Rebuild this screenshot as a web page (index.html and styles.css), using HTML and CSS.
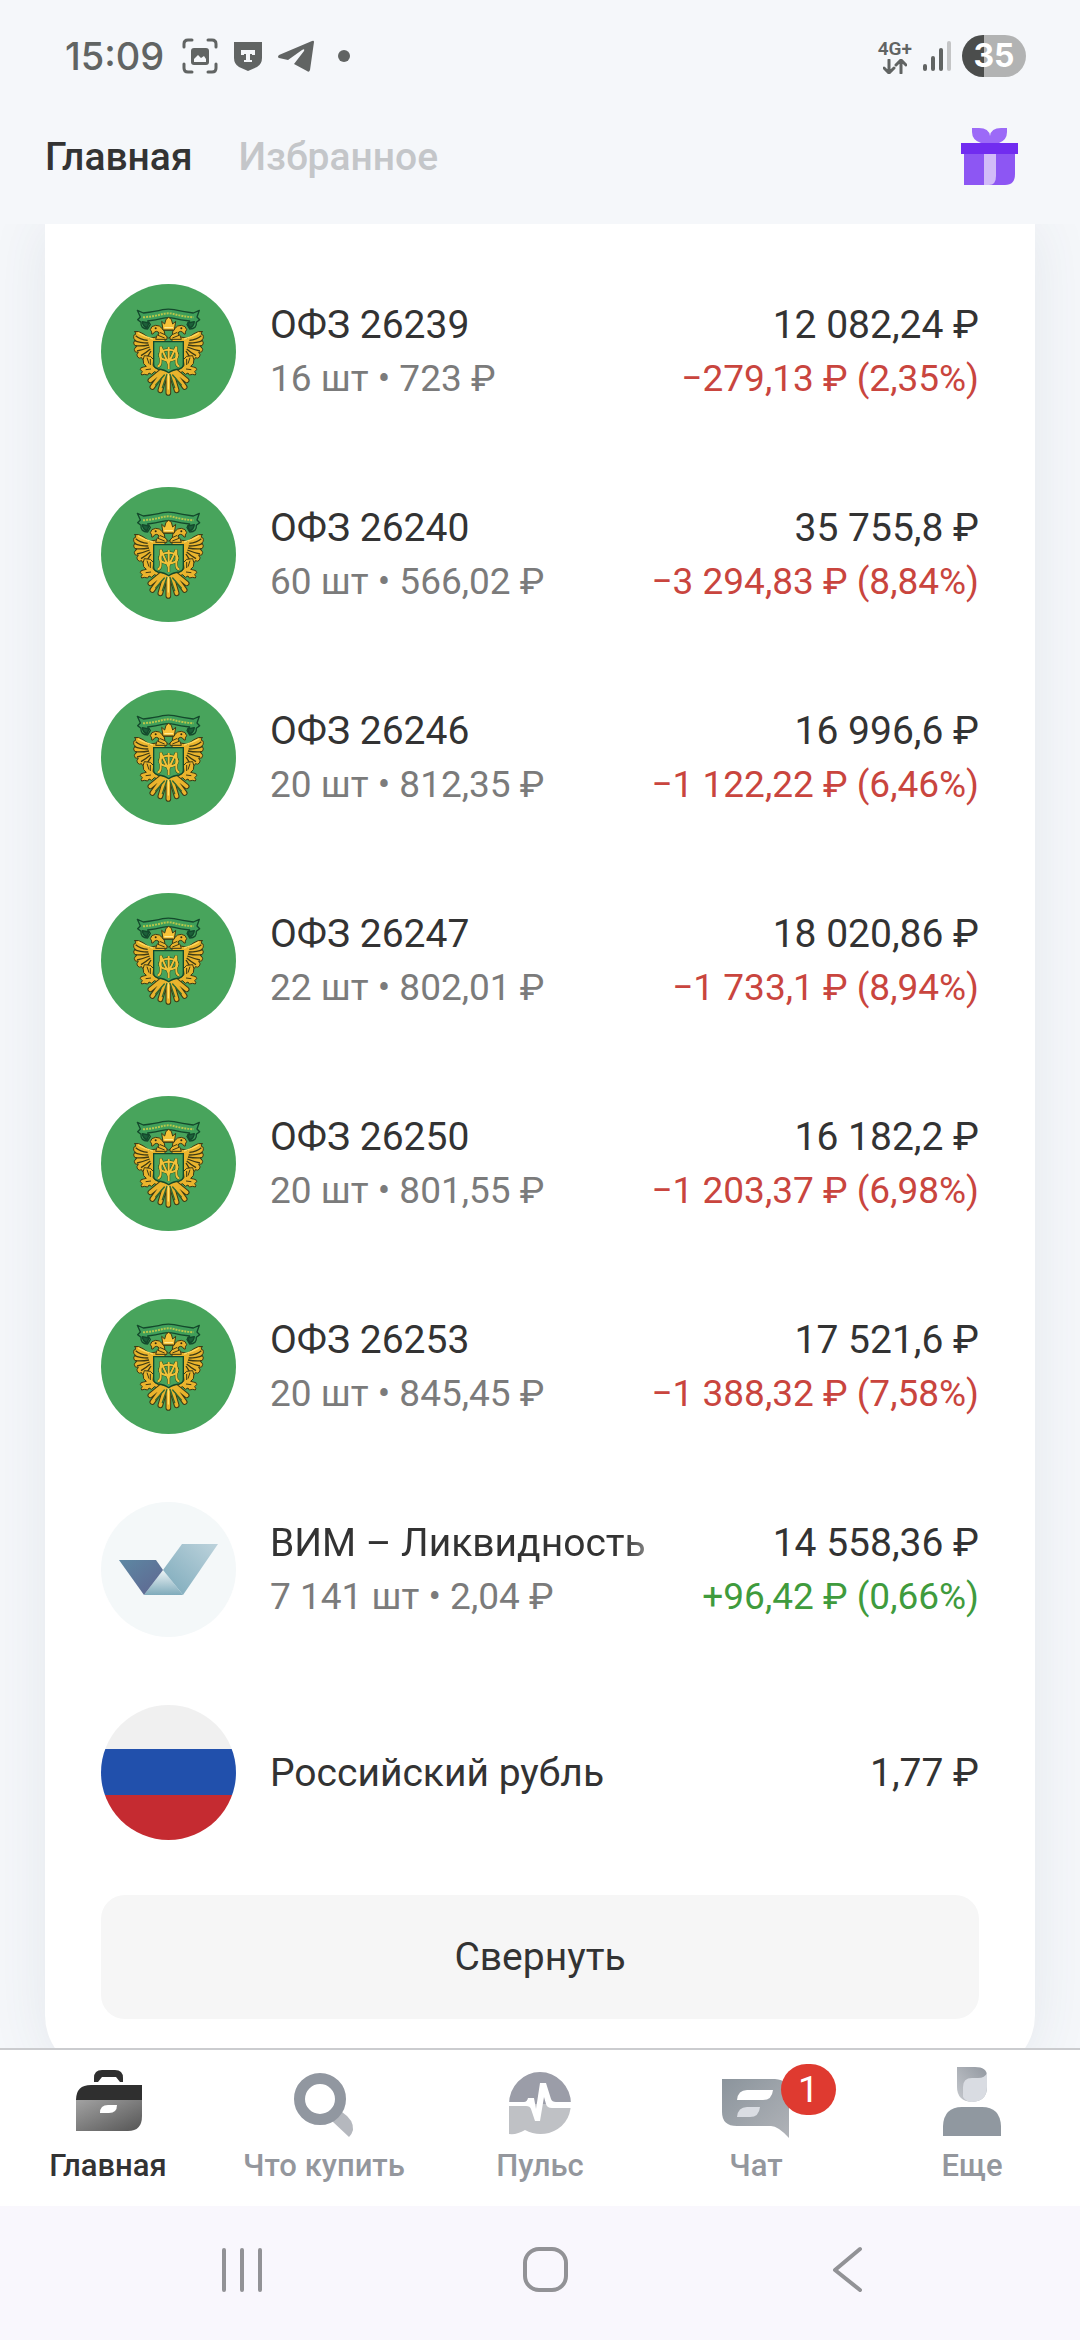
FILE: index.html
```html
<!DOCTYPE html>
<html lang="ru">
<head>
  <meta charset="UTF-8">
  <title>Портфель – Главная</title>
  <meta name="viewport" content="width=device-width, initial-scale=1">
  <link rel="stylesheet" href="styles.css">
</head>
<body>

  <!-- shared emblem for all the OFZ rows -->
  <svg class="defs" aria-hidden="true">
    <symbol id="emblem" viewBox="-72 -51 405 405">
      <circle cx="130.500" cy="151.500" r="202.500" fill="#48a45c"/>
      <g fill="#3f9f5a" stroke="#14492c" stroke-width="4" stroke-linejoin="round">
        <path d="M37 28l18 8q36-4 58-10 17-3 34 0 24 6 58 10l18-8-7 20 8 8-10 8q2 20-20 20l-8-14 8-10q-28-3-46-8-18-4-36 0-20 5-44 8l8 10-8 14q-22 0-20-20l-10-8 8-8z"/>
        <path d="M52 62l20 4-6 14q-12-2-14-18zM208 62l-20 4 6 14q12-2 14-18z" fill="#1c6039"/>
      </g>
      <path d="M54 49q34-3 60-10 16-4 32 0 26 7 60 10" fill="none" stroke="#b9c64a" stroke-width="6" stroke-dasharray="6 3"/>
      <g stroke="#3d3a14" stroke-width="3" stroke-linejoin="round">
        <g id="wing" fill="#eab42d">
          <!-- feathers, outer to inner -->
          <path d="M28 92q12-4 26 6l20 14 20-4 26 2v14H86v54q-10 4-14-4-10 6-14 2-6 2-8-6-8 4-12-2-6-6 2-14-12 2-12-8 0-6 8-10-10-2-10-10 0-6 6-8-8-4-6-12 0-6 6-6-2-6 2-8z"/>
          <path d="M32 104q14 12 36 14M28 118q16 8 42 8M30 134q20 2 42-2M36 150q18-4 38-12M48 164q14-8 28-20M64 172l14-22" fill="none" stroke-width="4"/>
          <path d="M40 96q16 10 44 18" fill="none" stroke="#ffd95e" stroke-width="4"/>
          <!-- head and neck -->
          <path d="M76 86q2-12 16-13 12-1 20 10l14 18v14H92l4-12 6-4q0-8-8-8-6 0-10 8l-4 0q2-6-4-13z"/>
          <path d="M99 103l20 8M104 94l18 8" fill="none"/>
          <circle cx="92" cy="82" r="3" fill="#2c2a12" stroke="none"/>
          <!-- leg -->
          <path d="M58 164l18 2 10 10-2 18 10 8 22 8-8 10-20-8-8 8-8-4-4 6-10-2-8 2q-4-4 2-10l-6-6q0-8 10-8l8-2-8-8q-4-12 2-24z"/>
          <path d="M66 170l6 18M76 174l0 18M62 206l16-2" fill="none"/>
        </g>
        <use href="#wing" transform="matrix(-1 0 0 1 261 0)"/>
        <!-- crown -->
        <path d="M114 87l-4-26 9 8 4-14 8-6 8 6 4 14 9-8-4 26z" fill="#f7c238"/>
        <path d="M118 80h26" fill="none" stroke="#fff0a0"/>
        <path d="M117 88h27q2 14-13 24-15-10-14-24z" fill="#48a45c"/>
      </g>
      <!-- tail -->
      <g fill="none" stroke-linecap="round">
        <path d="M130 210v66M122 214l-16 54M139 214l16 54M116 212l-34 46M145 212l34 46M108 212l-32 26M153 212l32 26" stroke="#3d3a14" stroke-width="17"/>
        <path d="M130 210v66M122 214l-16 54M139 214l16 54M116 212l-34 46M145 212l34 46M108 212l-32 26M153 212l32 26" stroke="#eab42d" stroke-width="11"/>
        <path d="M126 220l-14 40M135 220l14 40M118 222l-26 30M143 222l26 30" stroke="#2f6a35" stroke-width="4"/>
        <path d="M130 214v50" stroke="#ffe06a" stroke-width="4"/>
      </g>
      <!-- shield -->
      <path d="M86 122h89v68q0 10-12 14-20 2-32 11-12-9-32-11-13-4-13-14z" fill="#48a45c" stroke="#14492c" stroke-width="4"/>
      <!-- monogram -->
      <g id="mono" fill="none" stroke="#274a1d" stroke-width="9">
        <path d="M98 197q9-3 9-14v-46l23 50 24-50v46q0 11 9 14M131 138v66"/>
        <ellipse cx="131" cy="162" rx="27" ry="16"/>
      </g>
      <g fill="none" stroke="#f0c23a" stroke-width="6">
        <path d="M98 197q9-3 9-14v-46l23 50 24-50v46q0 11 9 14M131 138v66"/>
        <ellipse cx="131" cy="162" rx="27" ry="16"/>
      </g>
    </symbol>
  </svg>

  <div class="app">

    <div class="status-bar">
      <div class="status-left">
        <span class="clock">15:09</span>
        <svg width="36" height="36" viewBox="0 0 36 36" aria-hidden="true">
          <path d="M2 9V6q0-4 4-4h4M26 2h4q4 0 4 4v3M34 26v4q0 4-4 4h-4M10 34H6q-4 0-4-4v-4" fill="none" stroke="#616463" stroke-width="3" stroke-linecap="round"/>
          <rect x="9" y="10" width="18" height="17" rx="3" fill="#616463"/>
          <path d="M12 24v-3l4-4 3 3 3-2 2 3v3z" fill="#f5f7fa"/>
        </svg>
        <svg width="30" height="30" viewBox="0 0 30 30" aria-hidden="true">
          <path d="M1 1h28v16q0 6-5 9l-9 4-9-4q-5-3-5-9z" fill="#616463"/>
          <path d="M8 9h14v5h-3v-1h-2v6h2v2h-8v-2h2v-6h-2v1H8z" fill="#f5f7fa"/>
        </svg>
        <svg width="36" height="33" viewBox="0 0 36 33" aria-hidden="true">
          <path d="M34 1q2-1 2 1l-4 28q-1 3-3 1L16 24l10-13q1-3-2-1L10 20 1 18q-2-1 0-3z" fill="#616463"/>
        </svg>
        <span class="dot"></span>
      </div>
      <div class="status-right">
        <div class="network">
          <span>4G+</span>
          <svg width="24" height="15" viewBox="0 0 24 15" aria-hidden="true">
            <path d="M6 1v12M1 9l5 5 5-5M18 14V2M13 6l5-5 5 5" fill="none" stroke="#616463" stroke-width="3" stroke-linecap="round" stroke-linejoin="round"/>
          </svg>
        </div>
        <svg width="28" height="30" viewBox="0 0 28 30" aria-hidden="true">
          <g stroke="#616463" stroke-width="4" stroke-linecap="round">
            <path d="M2 25v3M10 17v11M18 9v19"/>
            <path d="M26 2v26" stroke="#c4c5c6"/>
          </g>
        </svg>
        <div class="battery">35</div>
      </div>
    </div>

    <header class="top-bar">
      <nav class="top-tabs">
        <a href="#" class="active">Главная</a>
        <a href="#">Избранное</a>
      </nav>
      <button class="gift" aria-label="Подарки">
        <svg width="58" height="58" viewBox="0 0 58 58" aria-hidden="true">
          <path d="M11 0h7q10 0 11 8Q30 0 40 0h6v4q0 8-8 11H20q-9-3-9-11z" fill="#9c6af7"/>
          <path d="M3 26h51v20q0 11-10 11H3z" fill="#8d56f3"/>
          <path d="M23 26h12v22q0 9-7 9h-5z" fill="#d2bbf8"/>
          <path d="M0 15h57v11H0z" fill="#712cf0"/>
        </svg>
      </button>
    </header>

    <main>
      <section class="card">
        <ul class="assets">
          <li>
            <svg class="logo" aria-hidden="true"><use href="#emblem"/></svg>
            <div class="info"><div class="name">ОФЗ 26239</div><div class="sub">16 шт • 723 ₽</div></div>
            <div class="value"><div class="name">12 082,24 ₽</div><div class="sub loss">−279,13 ₽ (2,35%)</div></div>
          </li>
          <li>
            <svg class="logo" aria-hidden="true"><use href="#emblem"/></svg>
            <div class="info"><div class="name">ОФЗ 26240</div><div class="sub">60 шт • 566,02 ₽</div></div>
            <div class="value"><div class="name">35 755,8 ₽</div><div class="sub loss">−3 294,83 ₽ (8,84%)</div></div>
          </li>
          <li>
            <svg class="logo" aria-hidden="true"><use href="#emblem"/></svg>
            <div class="info"><div class="name">ОФЗ 26246</div><div class="sub">20 шт • 812,35 ₽</div></div>
            <div class="value"><div class="name">16 996,6 ₽</div><div class="sub loss">−1 122,22 ₽ (6,46%)</div></div>
          </li>
          <li>
            <svg class="logo" aria-hidden="true"><use href="#emblem"/></svg>
            <div class="info"><div class="name">ОФЗ 26247</div><div class="sub">22 шт • 802,01 ₽</div></div>
            <div class="value"><div class="name">18 020,86 ₽</div><div class="sub loss">−1 733,1 ₽ (8,94%)</div></div>
          </li>
          <li>
            <svg class="logo" aria-hidden="true"><use href="#emblem"/></svg>
            <div class="info"><div class="name">ОФЗ 26250</div><div class="sub">20 шт • 801,55 ₽</div></div>
            <div class="value"><div class="name">16 182,2 ₽</div><div class="sub loss">−1 203,37 ₽ (6,98%)</div></div>
          </li>
          <li>
            <svg class="logo" aria-hidden="true"><use href="#emblem"/></svg>
            <div class="info"><div class="name">ОФЗ 26253</div><div class="sub">20 шт • 845,45 ₽</div></div>
            <div class="value"><div class="name">17 521,6 ₽</div><div class="sub loss">−1 388,32 ₽ (7,58%)</div></div>
          </li>
          <li>
            <svg class="logo" viewBox="0 0 135 135" aria-hidden="true">
              <defs>
                <linearGradient id="vim1" x1="0" y1="0" x2="1" y2="1"><stop offset="0" stop-color="#5d88a3"/><stop offset="1" stop-color="#5f6590"/></linearGradient>
                <linearGradient id="vim2" x1="1" y1="0" x2="0" y2="1"><stop offset="0" stop-color="#bdd3dc"/><stop offset="1" stop-color="#7ba9ba"/></linearGradient>
                <linearGradient id="vim3" x1="0" y1="0" x2="0" y2="1"><stop offset="0" stop-color="#eef4f6"/><stop offset="1" stop-color="#7fabbb"/></linearGradient>
              </defs>
              <circle cx="67.500" cy="67.500" r="67.500" fill="#f4f8f9"/>
              <path d="M43 93l19-25 20 25z" fill="url(#vim3)"/>
              <path d="M18 58h37l7 10-19 25z" fill="url(#vim1)"/>
              <path d="M81 42h36L82 93 62 68z" fill="url(#vim2)"/>
            </svg>
            <div class="info"><div class="name fade">ВИМ – Ликвидность</div><div class="sub">7 141 шт • 2,04 ₽</div></div>
            <div class="value"><div class="name">14 558,36 ₽</div><div class="sub gain">+96,42 ₽ (0,66%)</div></div>
          </li>
          <li>
            <div class="logo flag"></div>
            <div class="info"><div class="name">Российский рубль</div></div>
            <div class="value"><div class="name">1,77 ₽</div></div>
          </li>
        </ul>
        <button class="collapse">Свернуть</button>
      </section>
    </main>

    <nav class="tab-bar">
      <a href="#" class="active">
        <svg viewBox="0 0 72 72" aria-hidden="true">
          <defs><linearGradient id="bag" x1="0" y1="0" x2="1" y2="1"><stop offset="0" stop-color="#a2a2a2"/><stop offset="1" stop-color="#555"/></linearGradient></defs>
          <path d="M22 16V12q0-8 8-8h13q8 0 8 8v4h-3l-4-5H30l-4 5z" fill="#2f2f2f"/>
          <path d="M4 34h66v16q0 15-14 15H4z" fill="url(#bag)"/>
          <path d="M4 34q0-15 15-15h51v15z" fill="#2f2f2f"/>
          <path d="M28 47q0-8 8-8h9q0 8-8 8z" fill="#fff"/>
        </svg>
        <span>Главная</span>
      </a>
      <a href="#">
        <svg viewBox="0 0 72 72" aria-hidden="true">
          <path d="M44 55l10-9q12 8 11 18-1 4-4 7z" fill="#b5b8be"/>
          <circle cx="32" cy="33" r="20.500" fill="none" stroke="#9197a0" stroke-width="11"/>
        </svg>
        <span>Что купить</span>
      </a>
      <a href="#">
        <svg viewBox="0 0 72 72" aria-hidden="true">
          <path d="M5 38a31 32 0 0 1 62 0z" fill="#9b9da8"/>
          <path d="M5 38h62q-1 22-22 29-13 3-24-3-8 5-16 4z" fill="#bfc1c5"/>
          <path d="M4 36h16q3 0 4-4h6l2 11 4-26h6l5 16q1 3 5 3h16v6H48q-5 0-6-4l-2-7-4 24h-5l-4-12q-1-3-5-3H4z" fill="#fff"/>
        </svg>
        <span>Пульс</span>
      </a>
      <a href="#">
        <div class="icon-wrap">
          <svg viewBox="0 0 72 72" aria-hidden="true">
            <defs><linearGradient id="chat" x1="0" y1="0" x2="1" y2="1"><stop offset="0" stop-color="#8b949c"/><stop offset="1" stop-color="#b0b3b8"/></linearGradient></defs>
            <path d="M2 13h53q14 1 14 14v45q-11-12-18-12H17Q2 60 2 46z" fill="url(#chat)"/>
            <path d="M17 34q1-10 10-10h26q-1 10-10 10z" fill="#fff"/>
            <path d="M17 51q1-10 10-10h13q-1 10-10 10z" fill="#dadde3"/>
          </svg>
          <span class="badge">1</span>
        </div>
        <span>Чат</span>
      </a>
      <a href="#">
        <svg viewBox="0 0 72 72" aria-hidden="true">
          <defs><linearGradient id="hair" x1="1" y1="0" x2="0" y2="1"><stop offset="0" stop-color="#9298a0"/><stop offset="1" stop-color="#c6c9ce"/></linearGradient></defs>
          <path d="M21 1h18q12 0 12 9v11q0 14-15 15-15-1-15-15z" fill="url(#hair)"/>
          <path d="M27 31V21q0-9 9-9h6q7 0 9-5v14q0 14-15 15-6 0-9-5z" fill="#d9dce2"/>
          <path d="M7 70V60q1-19 19-19h20q18 0 19 19v10z" fill="#9098a0"/>
        </svg>
        <span>Еще</span>
      </a>
    </nav>

    <div class="system-nav">
      <button aria-label="Недавние">
        <svg viewBox="0 0 48 48" aria-hidden="true"><path d="M6 5v40M24 5v40M42 5v40"/></svg>
      </button>
      <button aria-label="Домой">
        <svg viewBox="0 0 48 48" aria-hidden="true"><rect x="4" y="4" width="41" height="41" rx="14"/></svg>
      </button>
      <button aria-label="Назад">
        <svg viewBox="0 0 48 48" aria-hidden="true"><path d="M37 4L12 25l25 20"/></svg>
      </button>
    </div>

  </div>
</body>
</html>
```
FILE: styles.css
```css
* {
  box-sizing: border-box;
}
body {
  margin: 0;
  background: #f5f7fa;
  color: #333;
  font-family: Roboto, 'Noto Sans', sans-serif;
}
a { text-decoration: none; }
button {
  padding: 0;
  border: none;
  background: none;
  font-family: inherit;
  cursor: pointer;
}
svg { display: block; }
.defs {
  position: absolute;
  width: 0;
  height: 0;
}
.app {
  display: flex;
  flex-direction: column;
  height: 100vh;
}

/* status bar */
.status-bar {
  display: flex;
  justify-content: space-between;
  align-items: center;
  height: 112px;
  padding: 0 54px 0 65px;
  color: #616463;
}
.status-left, .status-right {
  display: flex;
  align-items: center;
}
.status-left { gap: 15px; }
.status-right { gap: 11px; }
.clock {
  margin-right: 3px;
  font-family: Inter, sans-serif;
  font-size: 38px;
  font-weight: 500;
  line-height: 48px;
}
.dot {
  width: 12px;
  height: 12px;
  margin-left: 9px;
  border-radius: 50%;
  background: #616463;
}
.network {
  display: flex;
  flex-direction: column;
  align-items: center;
  font-size: 19px;
  font-weight: 600;
  line-height: 20px;
}
.battery {
  width: 64px;
  border-radius: 22px;
  background: linear-gradient(90deg, #4b4d4c 22px, #b2b3b3 22px);
  color: #fff;
  font-family: Inter, sans-serif;
  font-size: 32px;
  font-weight: 700;
  line-height: 42px;
  text-align: center;
}

/* top tabs */
.top-bar {
  display: flex;
  justify-content: space-between;
  align-items: center;
  height: 112px;
  padding: 0 61px 22px 45px;
}
.top-tabs {
  display: flex;
  gap: 46px;
}
.top-tabs a {
  color: #c4c6c9;
  font-size: 39px;
  font-weight: 500;
  line-height: 48px;
}
.top-tabs a.active { color: #333; }

/* portfolio card */
main {
  flex: 1;
  min-height: 0;
  overflow: hidden;
  padding: 0 45px;
}
.card {
  padding: 26px 56px 56px;
  border-radius: 0 0 60px 60px;
  background: #fff;
  box-shadow: 0 0 60px rgba(60, 75, 100, 0.09);
}
.assets {
  list-style: none;
  margin: 0;
  padding: 0;
}
.assets li {
  display: flex;
  align-items: center;
  gap: 34px;
  padding: 34px 0;
}
.logo {
  flex: none;
  width: 135px;
  height: 135px;
}
.flag {
  border-radius: 50%;
  background: linear-gradient(#f0f0f0 44px, #2150ac 44px, #2150ac 90px, #c52b31 90px);
}
.info { flex: 1; }
.value { text-align: right; }
.name, .sub {
  line-height: 54px;
  white-space: nowrap;
}
.name { font-size: 39px; }
.sub {
  color: #7b7b7b;
  font-size: 37px;
}
.loss { color: #c9453e; }
.gain { color: #3f9b3d; }
.fade {
  width: max-content;
  -webkit-mask-image: linear-gradient(90deg, #000 94%, rgba(0, 0, 0, 0.6));
  mask-image: linear-gradient(90deg, #000 94%, rgba(0, 0, 0, 0.6));
}
.collapse {
  width: 100%;
  margin-top: 21px;
  border-radius: 24px;
  background: #f6f6f6;
  color: #333;
  font-size: 39px;
  line-height: 124px;
}

/* app tabs */
.tab-bar {
  display: grid;
  grid-template-columns: repeat(5, 1fr);
  padding: 16px 0 20px;
  border-top: 2px solid #cbcccf;
  background: #fff;
}
.tab-bar a {
  display: flex;
  flex-direction: column;
  align-items: center;
  gap: 8px;
  color: #94979d;
  font-size: 31px;
  font-weight: 500;
  line-height: 40px;
}
.tab-bar a.active { color: #333; }
.tab-bar svg {
  width: 72px;
  height: 72px;
}
.icon-wrap { position: relative; }
.badge {
  position: absolute;
  top: -2px;
  left: 61px;
  width: 55px;
  border-radius: 26px;
  background: #df3a30;
  color: #fff;
  font-size: 37px;
  font-weight: 400;
  line-height: 51px;
  text-align: center;
}

/* android buttons */
.system-nav {
  display: flex;
  justify-content: space-between;
  padding: 39px 209px 47px 218px;
  background: #f9f7fd;
}
.system-nav svg {
  width: 48px;
  height: 48px;
  fill: none;
  stroke: #929296;
  stroke-width: 4;
  stroke-linecap: round;
  stroke-linejoin: round;
}
```
